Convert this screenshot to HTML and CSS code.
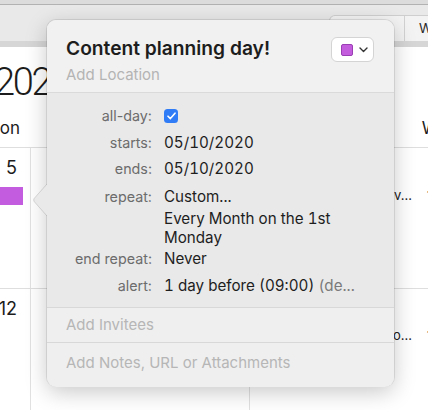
FILE: index.html
```html
<!DOCTYPE html>
<html>
<head>
<meta charset="utf-8">
<link rel="stylesheet" href="styles.css">
</head>
<body>
<div class="app">
  <div class="titlestrip"></div>
  <div class="toolbar">
    <div class="segmented">
      <div class="seg seg-day"></div>
      <div class="seg seg-week">Week</div>
    </div>
  </div>
  <div class="band"></div>
  <div class="cal-head">
    <div class="month-clip"><div class="month-title">2020</div></div>
    <div class="weekdays">
      <div class="wd">Mon</div>
      <div class="wd"></div>
      <div class="wd">Wed</div>
    </div>
  </div>
  <div class="weeks">
    <div class="week">
      <div class="cell">
        <div class="daynum">5</div>
        <div class="allday-bar"></div>
      </div>
      <div class="cell"></div>
      <div class="cell">
        <div class="daynum">&nbsp;</div>
        <div class="ev"><span class="ev-name">rev...</span><span class="ev-time">10:00</span></div>
      </div>
    </div>
    <div class="week">
      <div class="cell"><div class="daynum">12</div></div>
      <div class="cell"></div>
      <div class="cell">
        <div class="daynum">&nbsp;</div>
        <div class="ev ev-2"><span class="ev-name">invo...</span><span class="ev-time">10:00</span></div>
      </div>
    </div>
  </div>
</div>

<div class="popover">
  <svg class="arrow" width="16" height="34" viewBox="0 0 16 34">
    <path d="M15 1 L2.2 15.4 Q1 17 2.2 18.6 L15 33" fill="#e9e9e9" stroke="rgba(0,0,0,0.13)" stroke-width="1"/>
    <rect x="15" y="0" width="2" height="34" fill="#e9e9e9"/>
  </svg>
  <div class="pop-header">
    <div class="pop-titles">
      <div class="pop-title">Content planning day!</div>
      <div class="pop-location">Add Location</div>
    </div>
    <div class="color-btn">
      <span class="swatch"></span>
      <svg class="chev" width="9" height="6" viewBox="0 0 9 6"><path d="M1 1 L4.5 4.5 L8 1" fill="none" stroke="#333" stroke-width="1.4" stroke-linecap="round" stroke-linejoin="round"/></svg>
    </div>
  </div>
  <div class="pop-body">
    <div class="row r-allday">
      <div class="lbl">all-day:</div>
      <div class="val"><span class="check"><svg width="9" height="8" viewBox="0 0 9 8"><path d="M1 4.2 L3.4 6.6 L8 1.2" fill="none" stroke="#fff" stroke-width="1.6" stroke-linecap="round" stroke-linejoin="round"/></svg></span></div>
    </div>
    <div class="row r-starts">
      <div class="lbl">starts:</div>
      <div class="val">05/10/2020</div>
    </div>
    <div class="row r-ends">
      <div class="lbl">ends:</div>
      <div class="val">05/10/2020</div>
    </div>
    <div class="row r-repeat">
      <div class="lbl">repeat:</div>
      <div class="val">Custom...</div>
    </div>
    <div class="row r-desc">
      <div class="lbl"></div>
      <div class="val desc">Every Month on the 1st<br>Monday</div>
    </div>
    <div class="row r-endrepeat">
      <div class="lbl">end repeat:</div>
      <div class="val">Never</div>
    </div>
    <div class="row r-alert">
      <div class="lbl">alert:</div>
      <div class="val">1 day before (09:00) <span class="muted">(de...</span></div>
    </div>
  </div>
  <div class="pop-invitees">Add Invitees</div>
  <div class="pop-notes">Add Notes, URL or Attachments</div>
</div>
</body>
</html>
```

FILE: styles.css
```css
html, body {
  margin: 0;
  padding: 0;
}
body {
  width: 428px;
  height: 410px;
  overflow: hidden;
  position: relative;
  background: #ffffff;
  font-family: Inter, "Noto Sans", "Liberation Sans", sans-serif;
  color: #1f1f1f;
}
.app {
  width: 428px;
  height: 410px;
  overflow: hidden;
}
.titlestrip {
  height: 4px;
  background: #dcdcdc;
  border-bottom: 1px solid #b2b2b2;
}
.toolbar {
  height: 36px;
  background: #e9e9e9;
  display: flex;
  align-items: flex-end;
  justify-content: flex-start;
}
.segmented {
  display: flex;
  height: 26px;
  margin-left: 329px;
  border: 1px solid #cfcfcf;
  border-bottom: none;
  border-radius: 6px 0 0 0;
  background: #f3f3f3;
  box-sizing: border-box;
}
.seg {
  font-size: 13.5px;
  line-height: 25px;
  color: #2a2a2a;
}
.seg-day {
  width: 74px;
  border-right: 1px solid #d2d2d2;
}
.seg-week {
  padding-left: 14px;
  width: 60px;
}
.band {
  height: 6px;
  background: #d6d6d6;
}
.cal-head {
  height: 101px;
  box-sizing: border-box;
  padding-top: 10px;
  border-bottom: 1px solid #dedede;
  overflow: hidden;
}
.month-clip {
  width: 47px;
  overflow: hidden;
}
.month-title {
  font-family: Roboto, Inter, sans-serif;
  font-size: 38px;
  font-weight: 300;
  letter-spacing: -2.3px;
  line-height: 50px;
  margin-left: -6px;
  color: #1c1c1c;
  white-space: nowrap;
}
.weekdays {
  display: grid;
  grid-template-columns: repeat(3, 219px);
  margin-left: -188px;
  margin-top: 10px;
}
.wd {
  text-align: right;
  padding-right: 11px;
  font-size: 17px;
  line-height: 22px;
  color: #1c1c1c;
}
.weeks {
  margin-left: -188px;
}
.week {
  display: grid;
  grid-template-columns: repeat(3, 219px);
  height: 140px;
  border-bottom: 1px solid #dedede;
}
.cell {
  border-right: 1px solid #e1e1e1;
  padding-top: 8.5px;
  box-sizing: border-box;
}
.daynum {
  text-align: right;
  padding-right: 13px;
  font-size: 18px;
  line-height: 22px;
  color: #1c1c1c;
}
.allday-bar {
  margin-top: 8.5px;
  margin-right: 7px;
  height: 18px;
  background: #c45cdf;
}
.ev {
  display: flex;
  margin-top: 7.5px;
  font-size: 13px;
  line-height: 18px;
  color: #222;
  padding-left: 8px;
}
.ev-2 {
  margin-top: 6.5px;
}
.ev-name {
  width: 154px;
  text-align: right;
  white-space: nowrap;
}
.ev-time {
  margin-left: 15px;
  white-space: nowrap;
}
.popover {
  position: absolute;
  left: 47px;
  top: 20px;
  width: 347px;
  height: 366px;
  border-radius: 9px;
  background: #efefef;
  box-shadow: 0 0 0 1px rgba(0, 0, 0, 0.09), 0 6px 22px rgba(0, 0, 0, 0.22);
}
.arrow {
  position: absolute;
  left: -15px;
  top: 163px;
}
.pop-header {
  display: flex;
  justify-content: space-between;
  align-items: flex-start;
  height: 73px;
  box-sizing: border-box;
  padding: 16px 20px 0 19px;
  background: #f1f1f1;
  border-radius: 9px 9px 0 0;
  border-bottom: 1px solid #dadada;
}
.pop-title {
  font-size: 19.2px;
  font-weight: 600;
  line-height: 24px;
  color: #1d1d1d;
}
.pop-location {
  margin-top: 5px;
  font-size: 15px;
  line-height: 20px;
  color: #b4b4b4;
}
.color-btn {
  margin-top: 1px;
  width: 43px;
  height: 25px;
  box-sizing: border-box;
  border: 1px solid #d4d4d4;
  border-radius: 6px;
  background: #ffffff;
  display: flex;
  align-items: center;
  padding-left: 9px;
  gap: 6px;
}
.swatch {
  width: 12px;
  height: 12px;
  box-sizing: border-box;
  border-radius: 2px;
  background: #c35ddd;
  border: 1px solid #9b3fb5;
}
.pop-body {
  background: #e9e9e9;
  padding: 13px 0 11px 0;
  border-bottom: 1px solid #d8d8d8;
}
.row {
  display: grid;
  grid-template-columns: 105px 1fr;
  column-gap: 12px;
  align-items: center;
  line-height: 20px;
}
.lbl {
  text-align: right;
  font-size: 14.3px;
  color: #6c6c6c;
}
.val {
  font-size: 15.2px;
  color: #1e1e1e;
  white-space: nowrap;
  font-variant-numeric: tabular-nums;
}
.r-starts { margin-top: 7px; }
.r-ends { margin-top: 6px; }
.r-repeat { margin-top: 8px; }
.r-desc { margin-top: 2px; }
.desc { line-height: 19px; }
.r-endrepeat { margin-top: 2px; }
.r-alert { margin-top: 7px; }
.check {
  display: inline-flex;
  align-items: center;
  justify-content: center;
  width: 14px;
  height: 14px;
  border-radius: 3.5px;
  background: #2f7cf6;
  vertical-align: middle;
  margin-top: -2px;
}
.muted {
  color: #7a7a7a;
}
.pop-invitees {
  height: 35px;
  box-sizing: border-box;
  border-bottom: 1px solid #d8d8d8;
  padding-left: 19px;
  font-size: 15px;
  line-height: 33px;
  color: #b6b6b6;
  background: #efefef;
}
.pop-notes {
  height: 44px;
  padding-left: 19px;
  font-size: 15px;
  line-height: 40px;
  color: #b6b6b6;
  background: #efefef;
  border-radius: 0 0 9px 9px;
}
```
